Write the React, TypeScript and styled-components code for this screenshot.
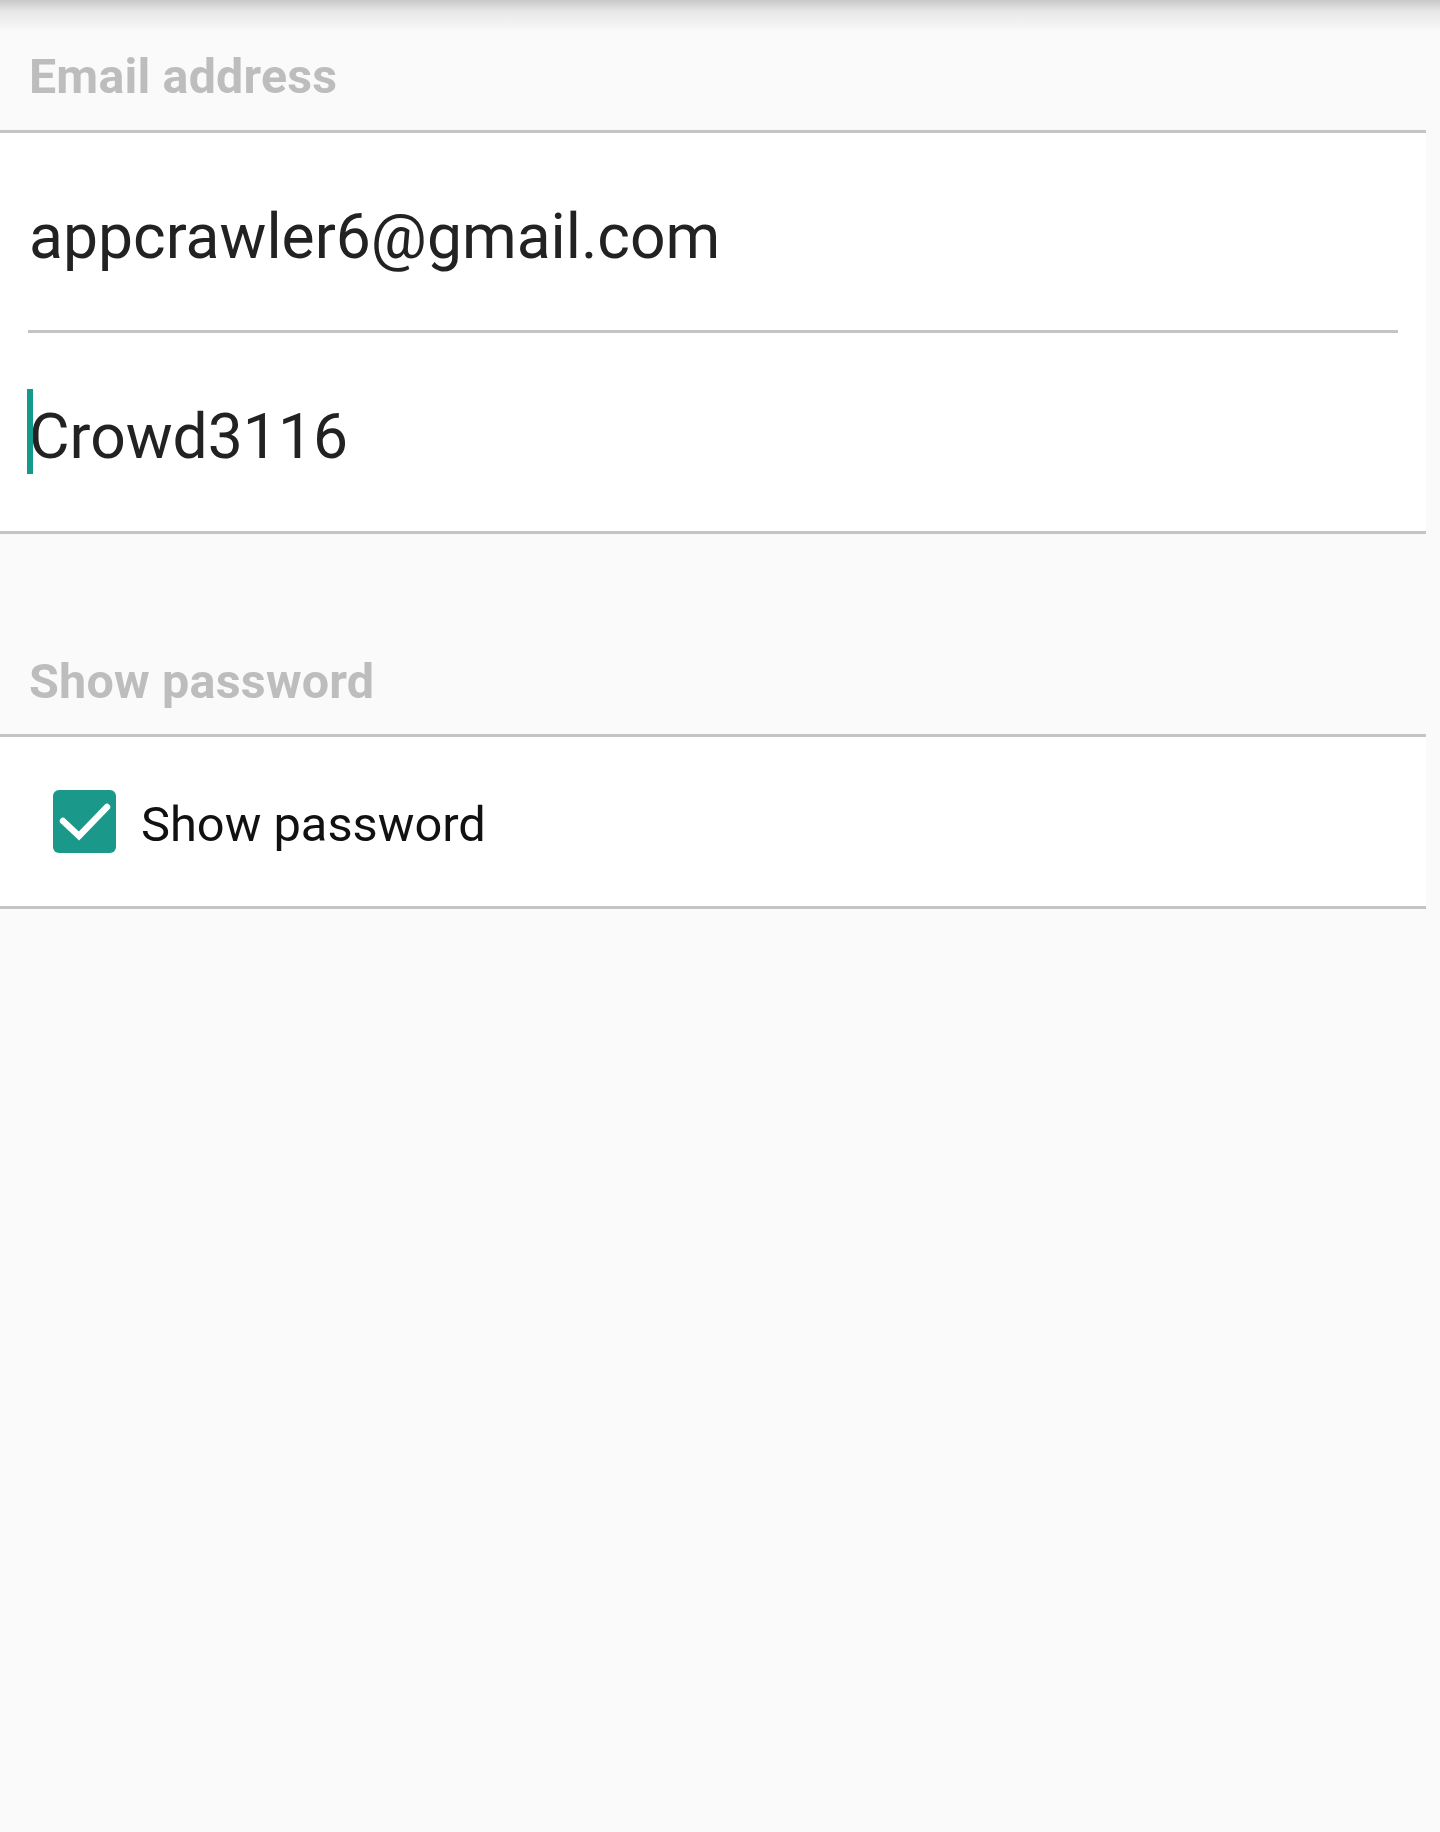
import React from "react";
import styled, { createGlobalStyle } from "styled-components";

const GlobalStyle = createGlobalStyle`
  html, body {
    margin: 0;
    padding: 0;
    background: #fafafa;
  }
  body {
    font-family: Roboto, "Noto Sans", "Liberation Sans", sans-serif;
    -webkit-font-smoothing: antialiased;
  }
`;

const Screen = styled.div`
  position: relative;
  width: 1440px;
  min-height: 1832px;
  background: #fafafa;
`;

const TopShadow = styled.div`
  position: absolute;
  top: 0;
  left: 0;
  right: 0;
  height: 32px;
  background: linear-gradient(
    to bottom,
    rgba(0, 0, 0, 0.2) 0%,
    rgba(0, 0, 0, 0.08) 35%,
    rgba(0, 0, 0, 0) 100%
  );
  pointer-events: none;
`;

const Category = styled.div<{ $height: number; $padTop: number }>`
  box-sizing: border-box;
  height: ${(p) => p.$height}px;
  padding: ${(p) => p.$padTop}px 0 0 29px;
  width: 1426px;
  border-bottom: 3px solid #c4c4c4;
`;

const CategoryLabel = styled.div<{ $size: number }>`
  font-size: ${(p) => p.$size}px;
  line-height: 56px;
  font-weight: 700;
  color: #bdbdbd;
  letter-spacing: 0.2px;
`;

const Panel = styled.div`
  width: 1426px;
  background: #ffffff;
  border-bottom: 3px solid #c4c4c4;
  display: flex;
  flex-direction: column;
`;

const Field = styled.div<{ $underline?: boolean }>`
  position: relative;
  box-sizing: border-box;
  height: ${(p) => (p.$underline ? 200 : 198)}px;
  margin: 0 28px;
  padding-top: 68px;
  border-bottom: ${(p) => (p.$underline ? "3px solid #c4c4c4" : "none")};
`;

const FieldText = styled.div`
  font-size: 62.4px;
  line-height: 72px;
  color: #222222;
  white-space: nowrap;
  padding-left: 1px;
`;

const Cursor = styled.span`
  position: absolute;
  left: -1px;
  top: 56px;
  width: 6px;
  height: 85px;
  background: #15998a;
`;

const CheckRow = styled.div`
  box-sizing: border-box;
  height: 169px;
  display: flex;
  align-items: center;
  padding-left: 53px;
  gap: 25px;
`;

const CheckBox = styled.div`
  width: 63px;
  height: 63px;
  border-radius: 6px;
  background: #1a998a;
  display: flex;
  align-items: center;
  justify-content: center;
  flex-shrink: 0;
`;

const CheckLabel = styled.div`
  font-size: 48.8px;
  line-height: 56px;
  color: #111111;
  padding-top: 6px;
`;

export default function App() {
  return (
    <>
      <GlobalStyle />
      <Screen>
        <Category $height={133} $padTop={49}>
          <CategoryLabel $size={48.3}>Email address</CategoryLabel>
        </Category>
        <Panel>
          <Field $underline>
            <FieldText>appcrawler6@gmail.com</FieldText>
          </Field>
          <Field>
            <Cursor />
            <FieldText>Crowd3116</FieldText>
          </Field>
        </Panel>
        <Category $height={203} $padTop={120}>
          <CategoryLabel $size={48.5}>Show password</CategoryLabel>
        </Category>
        <Panel>
          <CheckRow>
            <CheckBox>
              <svg width="63" height="63" viewBox="0 0 63 63">
                <path
                  d="M10 31 L26 46 L54 17"
                  fill="none"
                  stroke="#ffffff"
                  strokeWidth="6.5"
                  strokeLinecap="round"
                  strokeLinejoin="miter"
                />
              </svg>
            </CheckBox>
            <CheckLabel>Show password</CheckLabel>
          </CheckRow>
        </Panel>
        <TopShadow />
      </Screen>
    </>
  );
}
